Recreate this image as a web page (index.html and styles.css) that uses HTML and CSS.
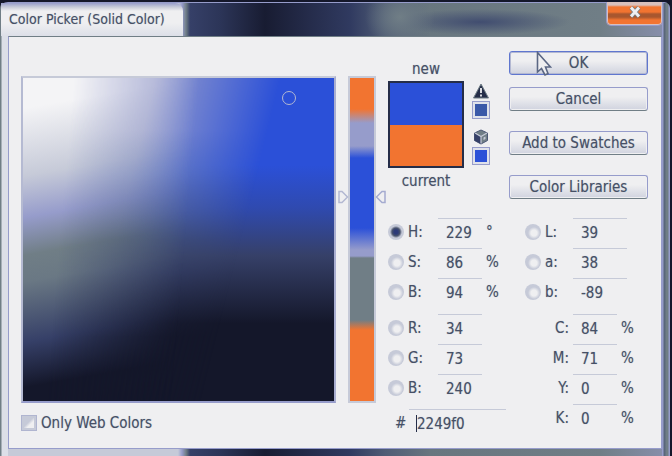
FILE: index.html
```html
<!DOCTYPE html>
<html lang="en">
<head>
<meta charset="utf-8">
<meta name="viewport" content="width=device-width, initial-scale=1">
<title>Color Picker (Solid Color)</title>
<link rel="stylesheet" href="styles.css">
</head>
<body>
<div class="dialog" role="dialog" aria-labelledby="title">
  <header class="titlebar">
    <h1 class="title" id="title">Color Picker (Solid Color)</h1>
    <button class="close" type="button" aria-label="Close">
      <svg width="14" height="12" viewBox="0 0 14 12"><path d="M3 1.5 L11 10.5 M11 1.5 L3 10.5" stroke="#707e86" stroke-width="4.4"/><path d="M3 1.5 L11 10.5 M11 1.5 L3 10.5" stroke="#efeff1" stroke-width="2.8"/></svg>
    </button>
  </header>
  <form class="panel">
    <section class="picker">
      <div class="spectrum">
        <div class="field"><span class="ring"></span></div>
        <div class="hue">
          <svg class="arrow arrow-left" width="11" height="14" viewBox="0 0 11 14"><path d="M1 1.5 H4 L9.5 7 L4 12.5 H1 Z" fill="#efeff1" stroke="#b3b8d2" stroke-width="1.5"/></svg>
          <svg class="arrow arrow-right" width="11" height="14" viewBox="0 0 11 14"><path d="M10 1.5 H7 L1.5 7 L7 12.5 H10 Z" fill="#efeff1" stroke="#a5abd0" stroke-width="1.5"/></svg>
        </div>
      </div>
      <label class="web"><input class="check" type="checkbox">Only Web Colors</label>
    </section>
    <section class="controls">
      <div class="top">
        <div class="compare">
          <span>new</span>
          <div class="swatch"></div>
          <span>current</span>
        </div>
        <div class="warnings">
          <svg width="16" height="16" viewBox="0 0 16 16"><path d="M8 1 L15.5 15 H0.5 Z" fill="#252d48" stroke="#707e86"/><path d="M8 5 V10 M8 11.5 V13.5" stroke="#efeff1" stroke-width="1.8"/></svg>
          <button class="chip chip-muted" type="button" aria-label="Use in-gamut color"></button>
          <svg class="cube" width="16" height="16" viewBox="0 0 16 16"><path d="M8 1 L14.5 4 V11.5 L8 15 L1.5 11.5 V4 Z" fill="#707e86" stroke="#4c5876"/><path d="M1.5 4 L8 7.5 V15 L1.5 11.5 Z" fill="#364068"/><path d="M2 4 L8 7.5 L14 4 M8 7.5 V14.5" fill="none" stroke="#c6cad8" stroke-width="1.2"/><path d="M10.5 8.5 L12.5 7.5 V10 L10.5 11 Z" fill="#c6cad8"/></svg>
          <button class="chip" type="button" aria-label="Use web safe color"></button>
        </div>
        <div class="actions">
          <button class="btn btn-default" type="button">OK
            <svg class="pointer" width="16" height="26" viewBox="0 0 16 26"><path d="M1.5 1.5 V21 L5.5 17.5 L9 24 L12 22.5 L9.5 16 H14.5 Z" fill="#efeff1" stroke="#5b6784" stroke-width="1.6"/></svg>
          </button>
          <button class="btn" type="button">Cancel</button>
          <button class="btn btn-spaced" type="button">Add to Swatches</button>
          <button class="btn btn-spaced" type="button">Color Libraries</button>
        </div>
      </div>
      <div class="values">
        <div class="column">
          <div class="row"><input class="radio" type="radio" name="mode" aria-label="Hue mode" checked><label for="h">H:</label><input class="num" id="h" value="229"><span class="unit">°</span></div>
          <div class="row"><input class="radio" type="radio" name="mode" aria-label="Saturation mode"><label for="s">S:</label><input class="num" id="s" value="86"><span class="unit">%</span></div>
          <div class="row"><input class="radio" type="radio" name="mode" aria-label="Brightness mode"><label for="v">B:</label><input class="num" id="v" value="94"><span class="unit">%</span></div>
          <div class="row row-group"><input class="radio" type="radio" name="mode" aria-label="Red mode"><label for="r">R:</label><input class="num" id="r" value="34"></div>
          <div class="row"><input class="radio" type="radio" name="mode" aria-label="Green mode"><label for="g">G:</label><input class="num" id="g" value="73"></div>
          <div class="row"><input class="radio" type="radio" name="mode" aria-label="Blue mode"><label for="b">B:</label><input class="num" id="b" value="240"></div>
          <div class="hexrow"><label for="hex">#</label><input class="num hex" id="hex" value="2249f0"><span class="caret"></span></div>
        </div>
        <div class="column column-right">
          <div class="row"><input class="radio" type="radio" name="mode" aria-label="Lightness mode"><label for="ll">L:</label><input class="num wide" id="ll" value="39"></div>
          <div class="row"><input class="radio" type="radio" name="mode" aria-label="a mode"><label for="la">a:</label><input class="num wide" id="la" value="38"></div>
          <div class="row"><input class="radio" type="radio" name="mode" aria-label="b mode"><label for="lb">b:</label><input class="num wide" id="lb" value="-89"></div>
          <div class="row row-group row-ink"><label for="c">C:</label><input class="num" id="c" value="84"><span class="unit">%</span></div>
          <div class="row row-ink"><label for="m">M:</label><input class="num" id="m" value="71"><span class="unit">%</span></div>
          <div class="row row-ink"><label for="y">Y:</label><input class="num" id="y" value="0"><span class="unit">%</span></div>
          <div class="row row-ink"><label for="k">K:</label><input class="num" id="k" value="0"><span class="unit">%</span></div>
        </div>
      </div>
    </section>
  </form>
</div>
</body>
</html>
```
FILE: styles.css
```css
* { box-sizing: border-box; }

body {
  margin: 0;
  background: #14172a;
  color: #465066;
  font: 15px/20px "DejaVu Sans Condensed", "Open Sans", sans-serif;
  text-shadow: 0 0 1px #a9b0bd;
}

button, input { font: inherit; color: inherit; margin: 0; padding: 0; text-shadow: inherit; }
svg { display: block; fill: none; }

.dialog {
  display: flex;
  flex-direction: column;
  min-height: 100vh;
  padding: 0 8px 7px;
  border: solid #14172a;
  border-width: 2px 2px 0 0;
  border-radius: 8px 8px 0 0;
  background:
    linear-gradient(#969ccb, #969ccb) top / 100% 1px no-repeat,
    linear-gradient(90deg, #707e86 0 1px, #dcdfe8 2px 8px, transparent 8px),
    linear-gradient(270deg, #969ccb 0 1px, #707e86 2px 4px, #59667b 5px 6px, #969ccb 7px 8px, transparent 8px),
    radial-gradient(ellipse 35px 30px at 400px 15px, #707e86, transparent),
    radial-gradient(ellipse 90px 13px at 480px 20px, #414d70, transparent),
    linear-gradient(90deg, #c6cad8 0 178px, #969ccb 182px, #707e86 186px, #364068 190px, #2c3558 220px, #181c32 265px, #252c4b 310px, #303a60 350px, #4f5c75 385px, #68767f 430px, #707e86 600px, #8990ae);
}

.titlebar {
  display: flex;
  justify-content: space-between;
  align-items: flex-start;
  height: 34px;
  margin: 0 -1px 0 -7px;
}

.title {
  margin: 1px 0 0;
  width: 182px;
  height: 33px;
  padding: 6px 0 6px 8px;
  border-radius: 0 8px 0 0;
  background: linear-gradient(#969ccb, #c6cad8 4px, #efeff1 8px, #efeff1 20px, #dcdfe8);
  font-size: 14px;
  font-weight: 400;
  white-space: nowrap;
}

.close {
  display: flex;
  justify-content: center;
  width: 57px;
  height: 24px;
  padding-top: 4px;
  border: 1px solid #969ccb;
  border-top: 0;
  border-radius: 0 0 5px 5px;
  box-shadow: inset 0 0 0 1px #d8c0bd;
  background: linear-gradient(#d8c0bd 3px, #f27430 5px 10px, #a8572f 12px 15px, #f27430 18px);
}

.panel {
  flex: 1;
  display: flex;
  gap: 12px;
  padding: 14px 13px 10px 12px;
  border: 1px solid #969ccb;
  border-top-color: #707e86;
  background: #efeff1;
}

.picker { flex: 1; padding-top: 25px; }
.spectrum { display: flex; gap: 12px; height: 327px; }

/* Three vertical ramps (white, mid tone, full colour) cross-faded sideways. */
.field {
  position: relative;
  flex: 1;
  border: 2px solid #c6cad8;
  border-color: #c6cad8 #a9aed0 #969ccb #b5bad2;
  background: linear-gradient(#2b50d8 27%, #2f4ab0 40%, #364068 55%, #14172a 76%);
}

.field::before,
.field::after {
  content: "";
  position: absolute;
  inset: 0;
}

.field::before {
  background: linear-gradient(#969ccb 16%, #7686ba 30%, #5a6a98 42%, #465474 50%, #364068 60%, #14172a 80%);
  mask-image: linear-gradient(104deg, #000 34%, transparent 66%);
}

.field::after {
  background: linear-gradient(170deg, #f4f4f6 8%, #c6cad8 26%, #969ccb 37%, #707e86 47%, #6a7884 54%, #364068 70%, #14172a 82%);
  mask-image: linear-gradient(95deg, #000 15%, transparent 52%);
}

.ring {
  position: absolute;
  z-index: 1;
  left: 85%;
  top: 4%;
  width: 14px;
  height: 14px;
  margin-left: -5px;
  border: 1px solid #b3b8d2;
  border-radius: 50%;
}

.hue {
  position: relative;
  width: 28px;
  border: 2px solid #c6cad8;
  background: linear-gradient(#f27430 0 31px, #969ccb 45px 68px, #2b50d8 80px 150px, #969ccb 172px 178px, #707e86 180px 242px, #f27430 252px);
}

.arrow { position: absolute; top: 112px; }
.arrow-left { right: 25px; }
.arrow-right { left: 25px; }

.web { display: flex; align-items: center; gap: 4px; margin-top: 10px; white-space: nowrap; }

.check {
  appearance: none;
  width: 16px;
  height: 16px;
  border: 1px solid #b0b5d0;
  background: linear-gradient(135deg, #c6cad8 45%, #efeff1 60%);
  box-shadow: inset 0 0 0 2px #c6cad8;
}

.controls { width: 260px; }
.top { display: flex; height: 157px; }

.compare { width: 76px; padding-top: 8px; text-align: center; }

.swatch {
  height: 87px;
  margin: 2px 0 3px;
  border: 2px solid #252d48;
  background: linear-gradient(#2b50d8 50%, #f27430 50%);
}

.warnings { width: 18px; margin: 32px 19px 0 8px; }
.warnings svg { margin: 0 1px; }
.warnings .cube { margin-top: 10px; }

.chip {
  display: block;
  width: 18px;
  height: 18px;
  margin-top: 2px;
  border: 1px solid #969ccb;
  background: #2b50d8;
  box-shadow: inset 0 0 0 2px #dfe1ea;
}
.chip-muted { background: #3a58a8; }

.actions { flex: 1; display: flex; flex-direction: column; gap: 12px; }

.btn {
  position: relative;
  height: 24px;
  border: 1px solid #969ccb;
  border-bottom-color: #707e86;
  border-radius: 3px;
  box-shadow: inset 0 0 0 1px #efeff1;
  background: linear-gradient(#efeff1 40%, #d0d3df);
  white-space: nowrap;
}
.btn-default { border-color: #5f76cf; box-shadow: inset 0 0 0 1px #b3b8d2; }
.btn-spaced { margin-top: 8px; }

.pointer { position: absolute; left: 26px; top: -1px; }

.values { display: flex; justify-content: space-between; margin-top: 9px; }
.column { width: 120px; }
.column-right { width: 123px; }

.row { display: flex; align-items: center; height: 30px; }
.row-group { margin-top: 6px; }
.row label { width: 30px; margin-left: 4px; }
.column-right label { width: 28px; }
.row-ink label { width: 44px; margin: 0 4px 0 0; text-align: right; }

.radio {
  appearance: none;
  width: 16px;
  height: 16px;
  border-radius: 50%;
  background: radial-gradient(circle at 9px 9px, #efeff1 3px, #c6cad8 6px);
}
.radio:checked { background: radial-gradient(circle, #2c3a78 2px, #48536c 4px, #c6cad8 6px); }

.num {
  width: 44px;
  height: 28px;
  padding-left: 8px;
  border: 0;
  border-top: 1px solid #c6cad8;
  border-radius: 0;
  background: transparent;
  outline: 0;
}
.wide { width: 54px; }
.unit { margin-left: 4px; }

.hexrow { position: relative; display: flex; align-items: center; height: 30px; margin-top: 5px; padding-left: 7px; }
.hexrow label { width: 14px; }
.hex { width: 97px; }
.caret { position: absolute; left: 28px; top: 7px; width: 1px; height: 17px; background: #252d48; }
```
